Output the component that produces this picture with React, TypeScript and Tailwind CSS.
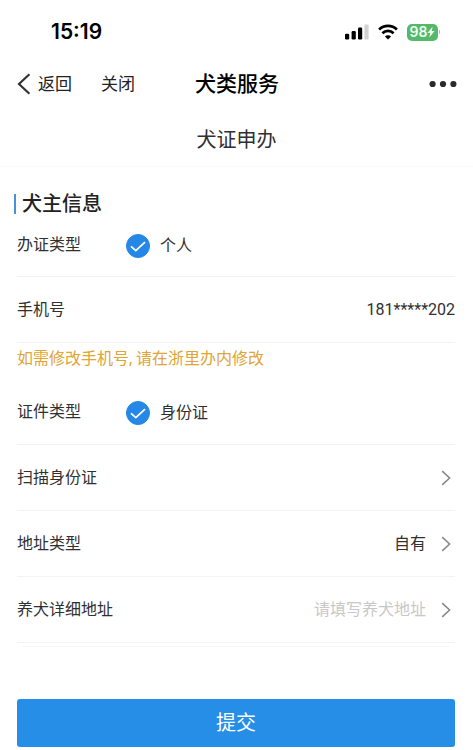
import React, { useState } from 'react';

interface RowProps {
  label: string;
  htmlFor?: string;
  children?: React.ReactNode;
}

const Arrow: React.FC = () => (
  <svg className="w-3 h-4 shrink-0" viewBox="0 0 12 16" fill="none" stroke="#8a8a8a" strokeWidth="1.6" aria-hidden="true">
    <path d="M2.2 1.2 9.6 8l-7.4 6.8" />
  </svg>
);

const Row: React.FC<RowProps> = ({ label, htmlFor, children }) => (
  <div className="flex items-center min-h-[66px] border-b border-[#f3f3f3]">
    <label htmlFor={htmlFor} className="shrink-0">{label}</label>
    {children}
  </div>
);

interface RadioRowProps {
  title: string;
  name: string;
  option: string;
  className: string;
}

const RadioRow: React.FC<RadioRowProps> = ({ title, name, option, className }) => (
  <div role="radiogroup" aria-label={title} className={`flex items-center border-b border-[#f3f3f3] ${className}`}>
    <span className="w-[109px] shrink-0">{title}</span>
    <label className="flex items-center gap-[10px] pt-[2px]">
      <span className="grid size-6">
        <input
          type="radio"
          name={name}
          defaultChecked
          className="col-start-1 row-start-1 size-6 appearance-none rounded-full border border-gray-300 checked:border-[#2587e6] checked:bg-[#2587e6]"
        />
        <svg className="col-start-1 row-start-1 size-6 pointer-events-none" viewBox="0 0 24 24" fill="none" stroke="#fff" strokeWidth="1.8" aria-hidden="true">
          <path d="m5 12.4 4.8 4.2 9.2-8.4" />
        </svg>
      </span>
      {option}
    </label>
  </div>
);

const StatusBar: React.FC = () => (
  <div className="flex items-center justify-between h-15 pt-1 pl-[51px] pr-[33px] text-black">
    <span className="font-[Inter,sans-serif] text-[21px] font-semibold">15:19</span>
    <div className="flex items-center gap-[9px]">
      <svg className="w-6 h-4" viewBox="0 0 24 16" aria-hidden="true">
        <rect x="0" y="9.8" width="4.2" height="5.7" rx="1.2" />
        <rect x="6.6" y="7" width="4.2" height="8.5" rx="1.2" />
        <rect x="13" y="3.6" width="4.2" height="11.9" rx="1.2" />
        <rect x="19.4" y="0.4" width="4.2" height="15.1" rx="1.2" fill="#d2d2d2" />
      </svg>
      <svg className="w-5 h-4" viewBox="0 0 20 16" fill="none" stroke="#000" strokeWidth="2.7" aria-hidden="true">
        <path d="M1.1 5.5a12.7 12.7 0 0 1 17.8 0" />
        <path d="M4.4 9.2a8 8 0 0 1 11.2 0" />
        <path d="M10 15.6 6.9 12.5a4.4 4.4 0 0 1 6.2 0Z" fill="#000" stroke="none" />
      </svg>
      <div className="flex items-center gap-px">
        <div className="flex items-center justify-center w-[31px] h-[17px] rounded-[5px] bg-[#53ba6b] text-[#f2fff4]">
          <span className="font-[Inter,sans-serif] text-sm leading-4 font-semibold">98</span>
          <svg className="w-2 h-3" viewBox="0 0 8 12" fill="#f2fff4" aria-hidden="true">
            <path d="M5.6.8.4 6.9h2.9L2.2 11.4 7.7 5.1H4.7Z" />
          </svg>
        </div>
        <span className="w-px h-1 rounded-r bg-[#8ed29d]" />
      </div>
    </div>
  </div>
);

const App: React.FC = () => {
  const [address, setAddress] = useState('');

  return (
    <div className="bg-white text-[#303030] text-base leading-6 font-[Roboto,'Noto_Sans_CJK_SC',sans-serif]">
      <StatusBar />

      <header className="grid grid-cols-[1fr_auto_1fr] items-center h-12 pl-[17px] pr-4 text-[17px] text-[#222]">
        <nav className="flex items-center gap-[29px]">
          <button type="button" className="flex items-center gap-[7px]">
            <svg className="w-[14px] h-[22px]" viewBox="0 0 14 22" fill="none" stroke="#333" strokeWidth="2.2" aria-hidden="true">
              <path d="M12.4 1.2 2 11l10.4 9.8" />
            </svg>
            返回
          </button>
          <button type="button">关闭</button>
        </nav>
        <h1 className="text-[21px] font-medium text-black">犬类服务</h1>
        <button type="button" aria-label="更多" className="justify-self-end">
          <svg className="w-7 h-2" viewBox="0 0 28 8" fill="#2a2a2a" aria-hidden="true">
            <circle cx="3.6" cy="4" r="3.1" />
            <circle cx="14" cy="4" r="3.1" />
            <circle cx="24.4" cy="4" r="3.1" />
          </svg>
        </button>
      </header>

      <h2 className="pt-5 pb-[14px] border-b border-[#f9f9f9] text-center text-xl leading-6">犬证申办</h2>

      <form className="pt-[27px] pl-[17px] pr-[18px]" onSubmit={(e) => e.preventDefault()}>
        <h3 className="-ml-[3px] pl-[6px] border-l-2 border-[#4a8fdb] text-xl leading-5 font-medium text-[#222]">犬主信息</h3>

        <RadioRow title="办证类型" name="applyType" option="个人" className="min-h-[63px]" />

        <Row label="手机号">
          <span className="ml-auto">181*****202</span>
        </Row>
        <p className="pb-1 leading-8 text-[#e0a437]">如需修改手机号, 请在浙里办内修改</p>

        <RadioRow title="证件类型" name="idType" option="身份证" className="min-h-[66px]" />

        <button type="button" className="flex items-center justify-between w-full min-h-[66px] pr-[3px] border-b border-[#f3f3f3]">
          扫描身份证
          <Arrow />
        </button>

        <Row label="地址类型" htmlFor="addressType">
          <div className="flex flex-1 items-center justify-end gap-[14px] pr-[3px]">
            <select id="addressType" className="appearance-none bg-transparent [text-align-last:right] outline-none">
              <option>自有</option>
            </select>
            <Arrow />
          </div>
        </Row>

        <Row label="养犬详细地址" htmlFor="address">
          <div className="flex flex-1 items-center gap-[14px] pr-[3px]">
            <input
              id="address"
              type="text"
              value={address}
              onChange={(e) => setAddress(e.target.value)}
              placeholder="请填写养犬地址"
              className="flex-1 min-w-0 bg-transparent text-right outline-none placeholder:text-[#c8c8c8]"
            />
            <Arrow />
          </div>
        </Row>
        <div className="mt-[3px] mx-[6px] border-b border-[#f7f7f7]" />

        <button type="submit" className="block w-full h-12 mt-[52px] mb-[3px] rounded-[3px] bg-[#268ee6] text-xl text-white">
          提交
        </button>
      </form>
    </div>
  );
};

export default App;
